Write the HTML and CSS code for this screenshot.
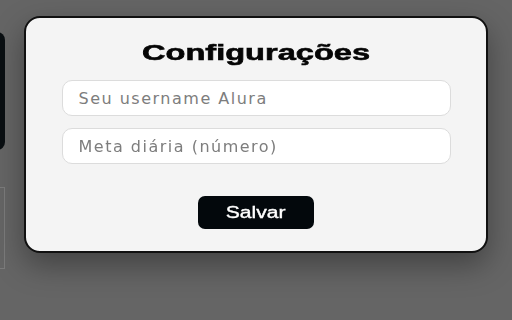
FILE: index.html
```html
<!DOCTYPE html>
<html lang="pt-BR">
<head>
<meta charset="utf-8">
<title>Configurações</title>
<link rel="stylesheet" href="styles.css">
</head>
<body>
<div class="page">
  <div class="dark-card"></div>
  <div class="outline-card"></div>
</div>
<div class="overlay">
  <div class="modal">
    <h2 class="modal-title"><span class="wide">Configurações</span></h2>
    <div class="fields">
      <input class="field" type="text" placeholder="Seu username Alura">
      <input class="field" type="text" placeholder="Meta diária (número)">
    </div>
    <button class="save-btn" type="button"><span class="wide-btn">Salvar</span></button>
  </div>
</div>
</body>
</html>
```
FILE: styles.css
```css
* { box-sizing: border-box; }
html, body {
  margin: 0;
  width: 512px;
  height: 320px;
  overflow: hidden;
  background: #656565;
  font-family: "DejaVu Sans", "Liberation Sans", sans-serif;
}
.page {
  display: flex;
  flex-direction: column;
  padding-top: 32px;
  margin-left: -35px;
}
.dark-card {
  width: 40px;
  height: 118px;
  background: #0a0f12;
  border-radius: 8px;
}
.outline-card {
  width: 40px;
  height: 82px;
  margin-top: 37px;
  border: 1px solid #7b7b7b;
}
.overlay {
  position: fixed;
  inset: 0;
  display: flex;
  justify-content: center;
  align-items: flex-start;
  padding-top: 16px;
}
.modal {
  width: 464px;
  height: 237px;
  background: #f4f4f4;
  border: 2px solid #111;
  border-radius: 16px;
  box-shadow: 0 12px 30px rgba(0, 0, 0, 0.35);
  display: flex;
  flex-direction: column;
  align-items: center;
  padding-top: 21px;
}
.modal-title {
  margin: 0;
  font-family: "Liberation Sans", Arial, sans-serif;
  font-size: 22px;
  line-height: 28px;
  font-weight: 700;
  color: #050505;
  -webkit-text-stroke: 0.6px #050505;
}
.wide {
  display: inline-block;
  transform: scaleX(1.48);
}
.fields {
  display: flex;
  flex-direction: column;
  gap: 12px;
  margin-top: 13px;
}
.field {
  width: 389px;
  height: 36px;
  background: #fff;
  border: 1px solid #dcdcdc;
  border-radius: 10px;
  padding: 0 0 0 16px;
  font-family: "DejaVu Sans", "Liberation Sans", sans-serif;
  font-size: 16px;
  letter-spacing: 1.5px;
  outline: none;
}
.field::placeholder {
  color: #7d7d7d;
}
.save-btn {
  margin-top: 32px;
  width: 116px;
  height: 33px;
  background: #03080c;
  color: #fff;
  border: none;
  border-radius: 7px;
  font-family: "Liberation Sans", Arial, sans-serif;
  font-size: 16px;
  font-weight: 400;
  -webkit-text-stroke: 0.35px #fff;
  padding: 0;
}
.wide-btn {
  display: inline-block;
  transform: scaleX(1.32);
}
```
